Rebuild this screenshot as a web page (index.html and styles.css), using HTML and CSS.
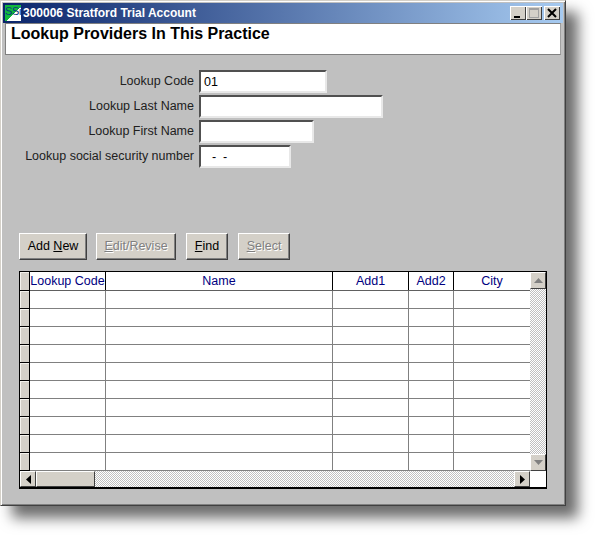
FILE: index.html
```html
<!DOCTYPE html>
<html lang="en">
<head>
    <meta charset="UTF-8">
    <title>Lookup Providers</title>
    <link rel="stylesheet" href="styles.css">
</head>
<body>

<div class="window">
    <!-- Title bar -->
    <div class="titlebar">
        <div class="app-icon"><span>SSi</span></div>
        <div class="title-text">300006 Stratford Trial Account</div>
        <div class="win-btn">
            <svg width="16" height="14" viewBox="0 0 16 14"><rect x="4" y="10" width="6" height="2" fill="#000"/></svg>
        </div>
        <div class="win-btn">
            <svg width="16" height="14" viewBox="0 0 16 14"><rect x="3.5" y="2.5" width="9" height="9" fill="none" stroke="#a0a0a0"/><rect x="3" y="2" width="10" height="2" fill="#a0a0a0"/></svg>
        </div>
        <div class="win-btn win-close">
            <svg width="16" height="14" viewBox="0 0 16 14"><path d="M4 3l8 8M12 3l-8 8" stroke="#000" stroke-width="2" fill="none"/></svg>
        </div>
    </div>

    <div class="page-heading">Lookup Providers In This Practice</div>

    <!-- Lookup form -->
    <div class="lookup-form">
        <div class="form-row">
            <label class="form-label">Lookup Code</label>
            <div class="field field-code">01</div>
        </div>
        <div class="form-row">
            <label class="form-label">Lookup Last Name</label>
            <div class="field field-last"></div>
        </div>
        <div class="form-row">
            <label class="form-label">Lookup First Name</label>
            <div class="field field-first"></div>
        </div>
        <div class="form-row">
            <label class="form-label">Lookup social security number</label>
            <div class="field field-ssn">-&nbsp;&nbsp;-</div>
        </div>
    </div>

    <div class="button-row">
        <div class="btn btn-add">Add <u>N</u>ew</div>
        <div class="btn btn-edit btn-disabled"><u>E</u>dit/Revise</div>
        <div class="btn btn-find"><u>F</u>ind</div>
        <div class="btn btn-select btn-disabled"><u>S</u>elect</div>
    </div>

    <!-- Results grid -->
    <div class="grid-box">
        <div class="grid-top">
            <table class="grid">
                <thead>
                    <tr><th class="row-head"></th><th class="col-code">Lookup Code</th><th class="col-name">Name</th><th class="col-add1">Add1</th><th class="col-add2">Add2</th><th class="col-city">City</th></tr>
                </thead>
                <tbody>
                    <tr><td class="row-head"></td><td></td><td></td><td></td><td></td><td></td></tr>
                    <tr><td class="row-head"></td><td></td><td></td><td></td><td></td><td></td></tr>
                    <tr><td class="row-head"></td><td></td><td></td><td></td><td></td><td></td></tr>
                    <tr><td class="row-head"></td><td></td><td></td><td></td><td></td><td></td></tr>
                    <tr><td class="row-head"></td><td></td><td></td><td></td><td></td><td></td></tr>
                    <tr><td class="row-head"></td><td></td><td></td><td></td><td></td><td></td></tr>
                    <tr><td class="row-head"></td><td></td><td></td><td></td><td></td><td></td></tr>
                    <tr><td class="row-head"></td><td></td><td></td><td></td><td></td><td></td></tr>
                    <tr><td class="row-head"></td><td></td><td></td><td></td><td></td><td></td></tr>
                    <tr><td class="row-head"></td><td></td><td></td><td></td><td></td><td></td></tr>
                </tbody>
            </table>
            <div class="vscroll">
                <div class="scroll-btn">
                    <svg width="9" height="5" viewBox="0 0 9 5"><path d="M4.5 0L9 5H0z" fill="#808080"/></svg>
                </div>
                <div class="scroll-track"></div>
                <div class="scroll-btn">
                    <svg width="9" height="5" viewBox="0 0 9 5"><path d="M0 0H9L4.5 5z" fill="#808080"/></svg>
                </div>
            </div>
        </div>
        <div class="hscroll">
            <div class="scroll-btn scroll-btn-h">
                <svg width="5" height="9" viewBox="0 0 5 9"><path d="M5 0V9L0 4.5z" fill="#000"/></svg>
            </div>
            <div class="scroll-thumb"></div>
            <div class="scroll-track"></div>
            <div class="scroll-btn scroll-btn-h">
                <svg width="5" height="9" viewBox="0 0 5 9"><path d="M0 0V9L5 4.5z" fill="#000"/></svg>
            </div>
            <div class="scroll-corner"></div>
        </div>
    </div>
</div>

</body>
</html>
```

FILE: styles.css
```css
html, body {
    height: 100%;
}
body {
    margin: 0;
    min-height: 535px;
    min-width: 595px;
    overflow: hidden;
    background-color: #fff;
    font-family: "Liberation Sans", Arial, sans-serif;
    font-size: 12px;
    color: #000;
}

/* Window frame */
.window {
    box-sizing: border-box;
    width: 566px;
    height: 506px;
    padding: 2px;
    background-color: #c0c0c0;
    border: 1px solid;
    border-color: #d4d0c8 #404040 #404040 #d4d0c8;
    box-shadow: inset 1px 1px 0 #fff, inset -1px -1px 0 #808080, 12px 12px 13px #6c6c6c;
}

/* Title bar */
.titlebar {
    display: flex;
    align-items: center;
    height: 20px;
    background: linear-gradient(to right, #0a246a, #a6caf0);
}
.app-icon {
    width: 16px;
    height: 16px;
    margin-left: 2px;
    background: linear-gradient(135deg, #12b83c 55%, #fff 55%);
    overflow: hidden;
}
.app-icon span {
    display: block;
    font-size: 11px;
    line-height: 12px;
    letter-spacing: -0.3px;
    color: #0a3a80;
}
.title-text {
    flex: 1;
    margin-left: 2px;
    font-weight: bold;
    font-size: 12px;
    color: #fff;
}
.win-btn {
    box-sizing: border-box;
    width: 16px;
    height: 14px;
    background-color: #d4d0c8;
    box-shadow: inset 1px 1px 0 #fff, inset -1px -1px 0 #404040;
    display: flex;
}
.win-close {
    margin: 0 3px 0 2px;
}

.page-heading {
    box-sizing: border-box;
    height: 32px;
    margin: 0 2px;
    padding: 0 0 0 5px;
    background-color: #fff;
    border: 1px solid;
    border-color: #808080 #a0a0a0 #808080 #808080;
    font-size: 16px;
    font-weight: bold;
    line-height: 19px;
}

/* Lookup form */
.lookup-form {
    display: flex;
    flex-direction: column;
    gap: 2px;
    margin-top: 15px;
}
.form-row {
    display: flex;
    align-items: center;
    gap: 5px;
}
.form-label {
    width: 191px;
    text-align: right;
    font-size: 12.5px;
    color: #202020;
    position: relative;
    top: -1px;
}
.field {
    box-sizing: border-box;
    height: 23px;
    padding: 1px 0 0 3px;
    background-color: #fff;
    border: 2px solid;
    border-color: #505050 #e8e8e8 #e8e8e8 #505050;
    font-size: 12.5px;
    line-height: 18px;
}
.field-code { width: 128px; }
.field-last { width: 184px; }
.field-first { width: 115px; }
.field-ssn { width: 92px; padding-left: 11px; }

/* Buttons */
.button-row {
    display: flex;
    margin: 65px 0 0 16px;
}
.btn {
    box-sizing: border-box;
    height: 27px;
    background-color: #d4d0c8;
    border: 1px solid;
    border-color: #fff #404040 #404040 #fff;
    box-shadow: inset -1px -1px 0 #808080;
    font-size: 12.5px;
    line-height: 25px;
    text-align: center;
}
.btn-add { width: 68px; }
.btn-edit { width: 80px; margin-left: 9px; }
.btn-find { width: 42px; margin-left: 10px; }
.btn-select { width: 52px; margin-left: 10px; }
.btn-disabled {
    color: #808080;
    text-shadow: 1px 1px 0 #fff;
}

/* Results grid */
.grid-box {
    box-sizing: border-box;
    width: 528px;
    height: 218px;
    margin: 11px 0 0 16px;
    background-color: #fff;
    border: 1px solid #000;
    border-width: 1px 1px 2px 1px;
}
.grid-top {
    display: flex;
    height: 199px;
}
.grid {
    width: 510px;
    height: 199px;
    table-layout: fixed;
    border-collapse: collapse;
    border-spacing: 0;
}
.grid th {
    height: 18px;
    padding: 0;
    border-right: 1px solid #000;
    border-bottom: 1px solid #606060;
    font-size: 12.5px;
    font-weight: normal;
    color: #000080;
    overflow: hidden;
    white-space: nowrap;
}
.grid td {
    height: 17px;
    padding: 0;
    border-right: 1px solid #808080;
    border-bottom: 1px solid #808080;
}
.grid th:last-child {
    border-right: none;
}
.grid td:last-child {
    border-right: none;
}
.grid .row-head {
    width: 9px;
    background-color: #d4d0c8;
    border-right: 1px solid #000;
    border-bottom: 1px solid #000;
    box-shadow: inset 1px 1px 0 #f4f2ec;
}
.col-code { width: 75px; }
.col-name { width: 226px; }
.col-add1 { width: 75px; }
.col-add2 { width: 44px; }

/* Scrollbars */
.vscroll {
    display: flex;
    flex-direction: column;
    width: 16px;
}
.hscroll {
    display: flex;
    height: 16px;
}
.scroll-btn {
    box-sizing: border-box;
    flex: none;
    width: 16px;
    height: 17px;
    display: flex;
    align-items: center;
    justify-content: center;
    background-color: #d4d0c8;
    border: 1px solid;
    border-color: #fff #404040 #404040 #fff;
}
.scroll-btn-h {
    height: 16px;
}
.scroll-track {
    flex: 1;
    background: repeating-conic-gradient(#fff 0 25%, #c0c0c0 0 50%) 0 0 / 2px 2px;
}
.scroll-thumb {
    box-sizing: border-box;
    flex: none;
    width: 59px;
    background-color: #d4d0c8;
    border: 1px solid;
    border-color: #fff #404040 #404040 #fff;
}
.scroll-corner {
    flex: none;
    width: 16px;
    background-color: #fff;
}
```
